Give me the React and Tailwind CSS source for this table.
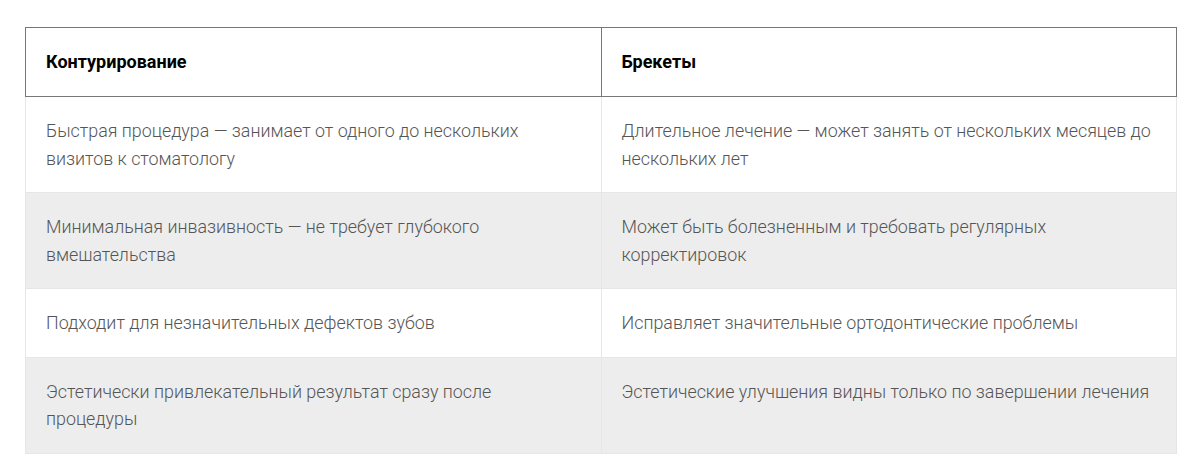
import React from "react";

const rows = [
  [
    "Быстрая процедура — занимает от одного до нескольких визитов к стоматологу",
    "Длительное лечение — может занять от нескольких месяцев до нескольких лет",
  ],
  [
    "Минимальная инвазивность — не требует глубокого вмешательства",
    "Может быть болезненным и требовать регулярных корректировок",
  ],
  [
    "Подходит для незначительных дефектов зубов",
    "Исправляет значительные ортодонтические проблемы",
  ],
  [
    "Эстетически привлекательный результат сразу после процедуры",
    "Эстетические улучшения видны только по завершении лечения",
  ],
];

const App = () => {
  return (
    <div
      className="bg-white pl-[25px] pt-[27px] pb-[25px] min-h-[476px]"
      style={{ fontFamily: "Roboto, 'Liberation Sans', sans-serif" }}
    >
      <table className="w-[1152px] border-collapse table-fixed">
        <thead>
          <tr>
            <th className="w-1/2 border border-[#777] text-left font-bold text-[18px] leading-[28px] text-black px-5 py-5">
              Контурирование
            </th>
            <th className="w-1/2 border border-[#777] text-left font-bold text-[18px] leading-[28px] text-black px-5 py-5">
              Брекеты
            </th>
          </tr>
        </thead>
        <tbody>
          {rows.map((row, i) => (
            <tr key={i} className={i % 2 === 1 ? "bg-[#ededed]" : "bg-white"}>
              {row.map((cell, j) => (
                <td
                  key={j}
                  className="border border-[#e6e6e6] border-t-0 align-top px-5 py-5 text-[17.85px] leading-[27.5px] font-light text-[#555]"
                >
                  {cell}
                </td>
              ))}
            </tr>
          ))}
        </tbody>
      </table>
    </div>
  );
};

export default App;
